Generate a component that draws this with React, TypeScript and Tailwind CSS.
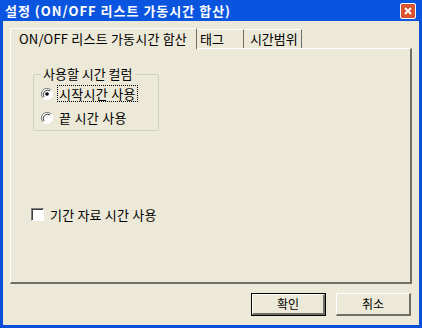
import type {FC} from 'react';

const font = {fontFamily: '"Noto Sans CJK KR", "Liberation Sans", sans-serif'};

const Radio: FC<{checked?: boolean}> = ({checked}) => (
  <svg width="12" height="12" viewBox="0 0 12 12" className="shrink-0">
    <circle cx="6" cy="6" r="5.5" fill="#ffffff" />
    <path d="M10 2 A5.5 5.5 0 0 0 2 10" stroke="#808080" strokeWidth="1" fill="none" />
    <path d="M9 3 A4.3 4.3 0 0 0 3 9" stroke="#404040" strokeWidth="1" fill="none" />
    <path d="M2 10 A5.5 5.5 0 0 0 10 2" stroke="#ffffff" strokeWidth="1" fill="none" />
    {checked && <circle cx="6" cy="6" r="1.8" fill="#000000" />}
  </svg>
);

const Button: FC<{title: string; isDefault?: boolean}> = ({title, isDefault}) => (
  <button
    className={`h-[23px] w-[75px] bg-[#ECE9D8] text-[12px] text-black ${
      isDefault ? 'border border-black' : ''
    }`}
  >
    <span className="flex h-full w-full items-center justify-center border-t border-l border-t-white border-l-white border-r-2 border-b-2 border-r-[#716F64] border-b-[#716F64]">
      {title}
    </span>
  </button>
);

const App: FC = () => {
  return (
    <div className="flex h-[328px] w-[422px] flex-col bg-[#0A4FD8] text-black" style={font}>
      {/* title bar */}
      <div className="flex h-[21px] items-center justify-between bg-[#0A55E0] pl-[5px] pr-[6px]">
        <span className="text-[13px] font-bold leading-none tracking-[1px] text-white">설정 (ON/OFF 리스트 가동시간 합산)</span>
        <div className="flex h-[16px] w-[16px] items-center justify-center rounded-[2px] border border-white bg-[#D8532F]">
          <svg width="10" height="10" viewBox="0 0 10 10">
            <path d="M2 2 L8 8 M8 2 L2 8" stroke="#ffffff" strokeWidth="2" />
          </svg>
        </div>
      </div>

      {/* body */}
      <div className="mx-[3px] mb-[3px] flex flex-1 flex-col bg-[#ECE9D8] px-[7px] pt-[6px] text-[12px]">
        {/* tabs */}
        <div className="flex h-[21px] items-end">
          <div className="relative z-10 -mb-px flex h-[21px] items-center border-t border-l border-t-white border-l-white border-r border-r-[#716F64] bg-[#ECE9D8] pl-[8px] pr-[9px] text-[13px] tracking-[0.2px]">
            ON/OFF 리스트 가동시간 합산
          </div>
          <div className="flex h-[19px] items-center border-t border-r border-t-white border-r-[#716F64] pl-[3px] pr-[19px] text-[13px]">
            태그
          </div>
          <div className="flex h-[19px] items-center border-t border-r border-t-white border-r-[#716F64] pl-[6px] pr-[3px] text-[13px]">
            시간범위
          </div>
        </div>

        {/* panel */}
        <div className="flex h-[236px] flex-col border-t border-l border-t-white border-l-white border-r-2 border-b-2 border-r-[#716F64] border-b-[#716F64] pl-[22px] pt-[18px]">
          <fieldset className="m-0 h-[64px] w-[126px] rounded-[2px] border border-[#D0D0BF] px-[7px] pt-[4px]">
            <legend className="px-[2px] text-[13px] leading-[14px]">사용할 시간 컬럼</legend>
            <div className="flex items-center gap-[4px]">
              <Radio checked />
              <span className="border border-dotted border-black px-[1px] text-[13px] leading-[15px] tracking-[0.3px]">시작시간 사용</span>
            </div>
            <div className="mt-[8px] flex items-center gap-[6px]">
              <Radio />
              <span className="text-[13px] leading-[15px] tracking-[0.3px]">끝 시간 사용</span>
            </div>
          </fieldset>

          <div className="mt-[74px] ml-[-2px] flex items-center gap-[6px]">
            <span className="h-[13px] w-[13px] border border-t-[#808080] border-l-[#808080] border-r-white border-b-white bg-white shadow-[inset_1px_1px_0_#404040]" />
            <span className="text-[13px] tracking-[0.2px]">기간 자료 시간 사용</span>
          </div>
        </div>

        {/* buttons */}
        <div className="mt-[9px] flex justify-end gap-[10px] pr-px">
          <Button title="확인" isDefault />
          <Button title="취소" />
        </div>
      </div>
    </div>
  );
};

export default App;
